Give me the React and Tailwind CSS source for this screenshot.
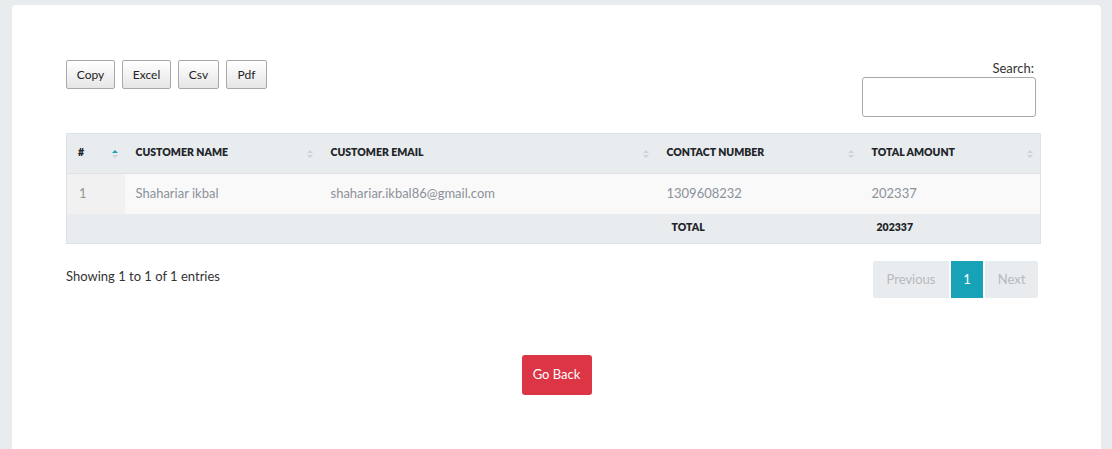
import React from 'react';

const SortIcon = ({ active }) => (
  <svg width="6" height="8" viewBox="0 0 6 8" className="absolute right-[7px] top-1/2 -translate-y-1/2">
    <path d="M0 3 L3 0 L6 3 Z" fill={active ? '#17a2b8' : '#cfd3d8'} />
    <path d="M0 5 L3 8 L6 5 Z" fill="#cfd3d8" />
  </svg>
);

const columns = [
  { label: '#', w: 'w-[58px]', active: true },
  { label: 'Customer Name', w: 'w-[195px]' },
  { label: 'Customer Email', w: 'w-[336px]' },
  { label: 'Contact Number', w: 'w-[205px]' },
  { label: 'Total Amount', w: 'w-[180px]' },
];

const exportButtons = [
  { label: 'Copy', w: 'w-[49px]' },
  { label: 'Excel', w: 'w-[49px]' },
  { label: 'Csv', w: 'w-[41px]' },
  { label: 'Pdf', w: 'w-[41px]' },
];

export default function App() {
  return (
    <div className="min-h-[449px] bg-[#e9ecef] pt-[5px] pl-[12px] font-['Lato','Open_Sans',sans-serif]">
      <div className="w-[1089px] min-h-[460px] bg-white rounded-[4px] pt-[55px]">
        <div className="pl-[54px] pr-[61px]">
          {/* toolbar */}
          <div className="flex justify-between items-start">
            <div className="flex gap-[7px]">
              {exportButtons.map((b) => (
                <button
                  key={b.label}
                  className={`${b.w} h-[29px] text-[12px] text-[#222] border border-[#a9a9a9] rounded-[2px] bg-gradient-to-b from-white to-[#e6e6e6]`}
                >
                  {b.label}
                </button>
              ))}
            </div>
            <div className="flex flex-col items-end pr-[4px]">
              <label className="text-[13px] text-[#333] leading-[16px] pr-[2px]">Search:</label>
              <input className="mt-[1px] w-[174px] h-[40px] border border-[#aaa] rounded-[3px] outline-none" />
            </div>
          </div>

          {/* table */}
          <table className="mt-[16px] w-[973px] border-collapse border border-[#dee2e6] table-fixed">
            <thead>
              <tr className="bg-[#e9ecef] h-[40px]">
                {columns.map((c) => (
                  <th
                    key={c.label}
                    className={`${c.w} relative text-left pl-[11px] pb-[2px] text-[10.5px] font-extrabold uppercase text-[#212529] border-b border-[#dee2e6]`}
                  >
                    {c.label}
                    <SortIcon active={c.active} />
                  </th>
                ))}
              </tr>
            </thead>
            <tbody>
              <tr className="h-[40px] bg-[#f9f9f9] text-[13px] text-[#8c919a]">
                <td className="pl-[12px] bg-[#f1f1f1] text-[#9a958c]">1</td>
                <td className="pl-[11px]">Shahariar ikbal</td>
                <td className="pl-[11px]">shahariar.ikbal86@gmail.com</td>
                <td className="pl-[11px]">1309608232</td>
                <td className="pl-[11px]">202337</td>
              </tr>
            </tbody>
            <tfoot>
              <tr className="h-[30px] bg-[#e9ecef] text-[10.5px] font-extrabold text-[#212529]">
                <td></td>
                <td></td>
                <td></td>
                <td className="pl-[16px]">TOTAL</td>
                <td className="pl-[16px]">202337</td>
              </tr>
            </tfoot>
          </table>

          {/* info + pagination */}
          <div className="mt-[17px] flex justify-between items-start w-[974px]">
            <div className="pt-[7px] text-[13px] leading-[16px] text-[#333]">Showing 1 to 1 of 1 entries</div>
            <div className="flex gap-[2px] pr-[2px] text-[13px]">
              <span className="h-[37px] w-[76px] flex items-center justify-center bg-[#e9ecef] text-[#b5b9be] rounded-l-[2px]">Previous</span>
              <span className="h-[37px] w-[32px] flex items-center justify-center bg-[#17a2b8] text-white">1</span>
              <span className="h-[37px] w-[53px] flex items-center justify-center bg-[#e9ecef] text-[#b5b9be] rounded-r-[2px]">Next</span>
            </div>
          </div>
        </div>

        <div className="mt-[57px] flex justify-center">
          <button className="h-[40px] w-[70px] bg-[#dc3545] text-white text-[13px] rounded-[3px]">Go Back</button>
        </div>
      </div>
    </div>
  );
}
